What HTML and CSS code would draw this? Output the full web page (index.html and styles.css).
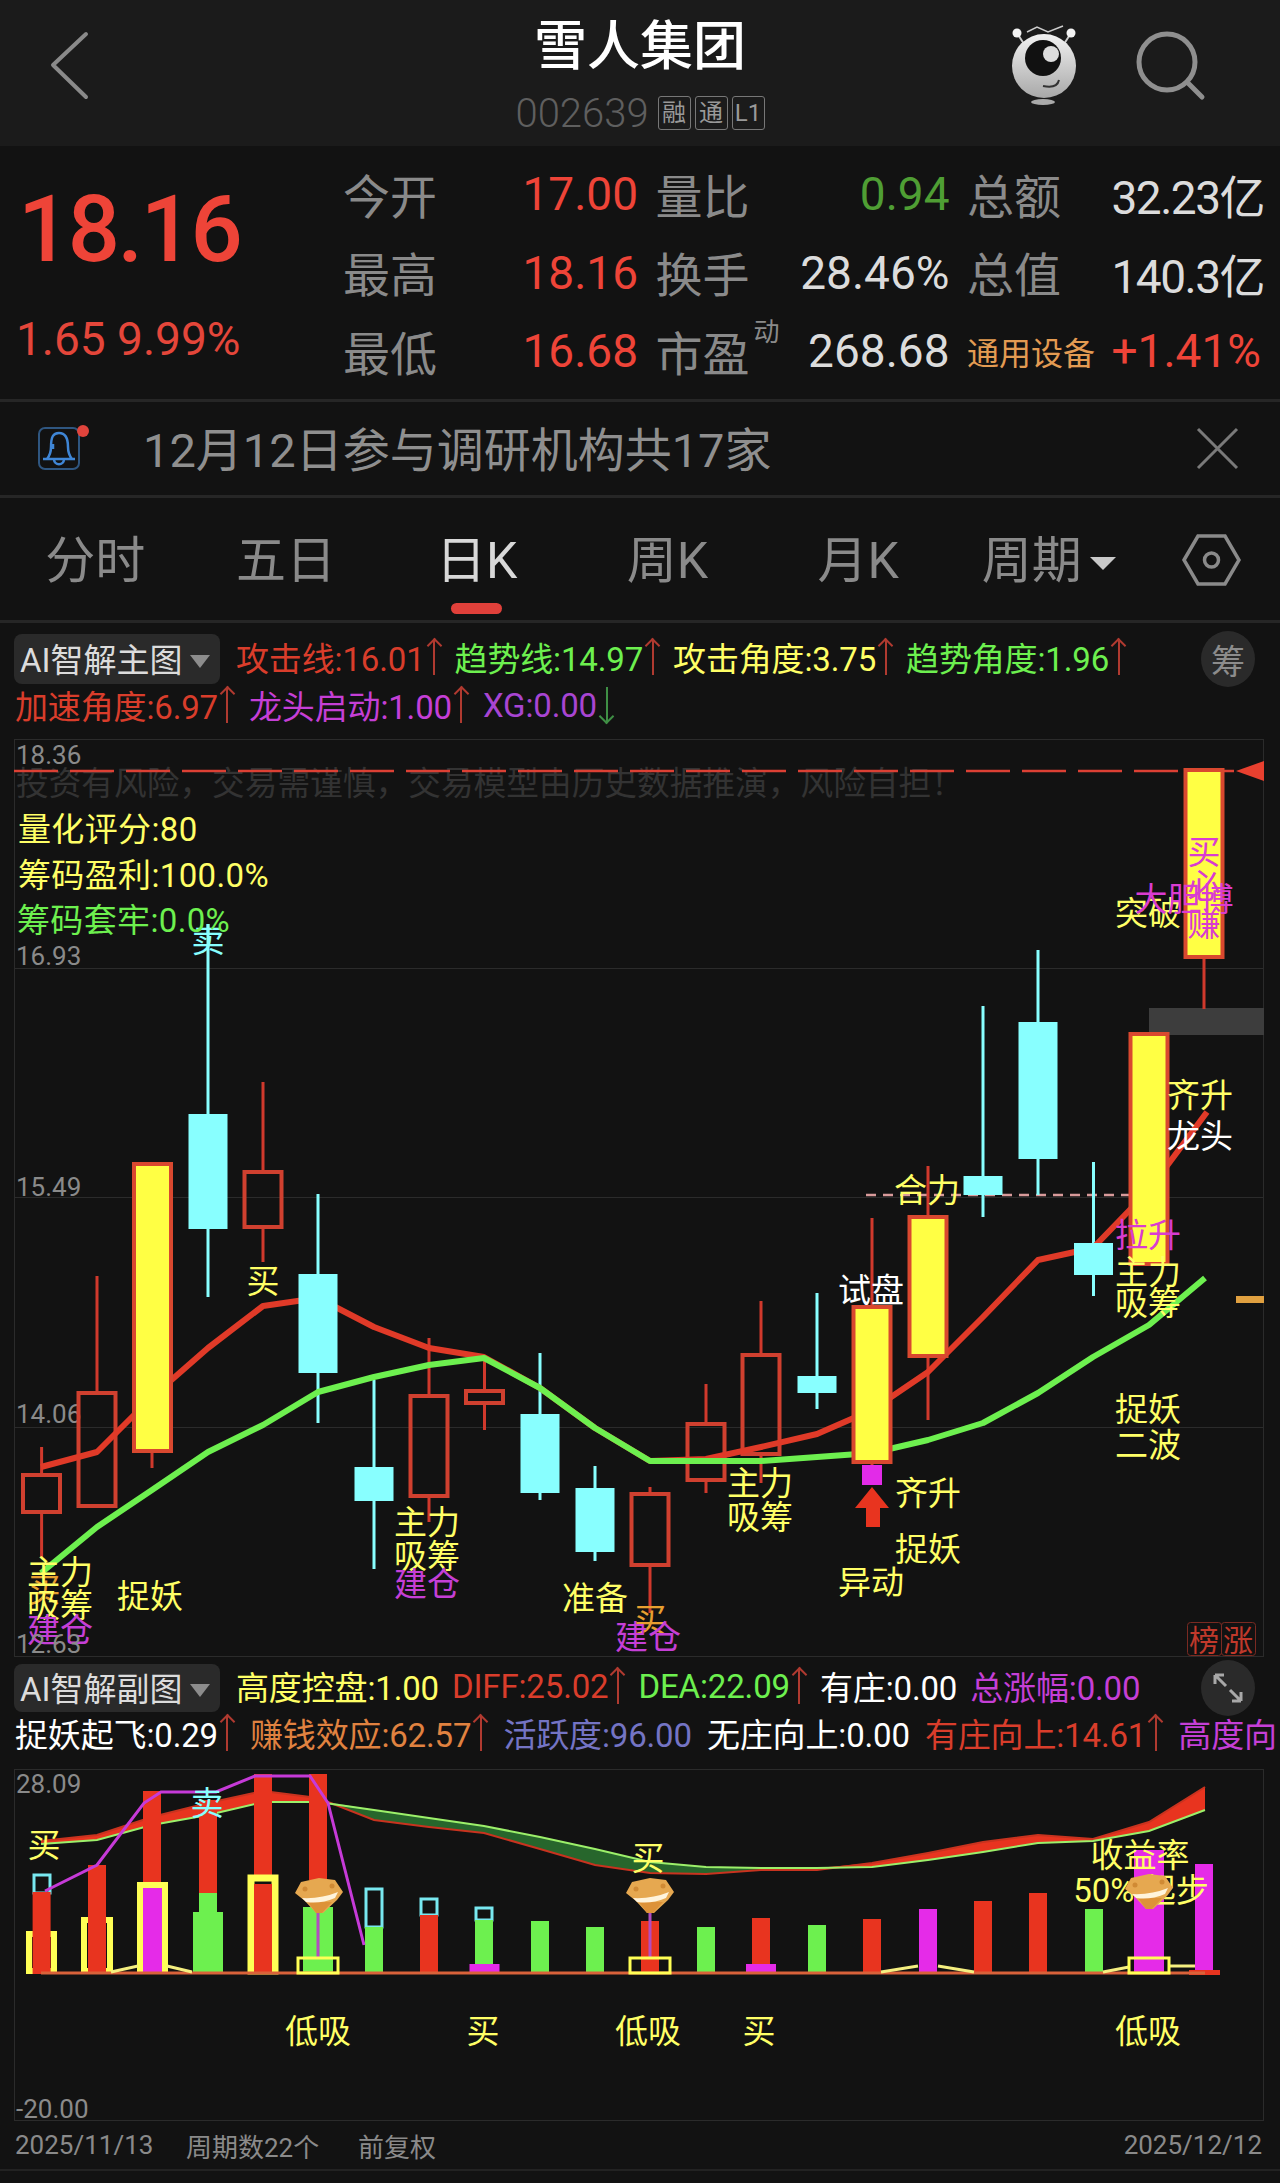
FILE: index.html
```html
<!DOCTYPE html>
<html lang="zh-CN">
<head>
  <meta charset="UTF-8">
  <meta name="viewport" content="width=device-width, initial-scale=1.0">
  <title>雪人集团 002639</title>
  <link rel="stylesheet" href="styles.css">
</head>
<body>
  <!-- Title bar -->
  <header class="topbar">
    <div class="topbar-left">
      <svg class="back-icon" viewBox="50 0 40 146"><path d="M86 34 L53 65 L86 97" /></svg>
    </div>
    <div class="topbar-title">
      <h1>雪人集团</h1>
      <div class="code-row">
        <span class="code">002639</span>
        <span class="tag">融</span><span class="tag">通</span><span class="tag">L1</span>
      </div>
    </div>
    <div class="topbar-right">
      <svg class="top-icons" viewBox="1010 0 200 146">
        <defs>
          <linearGradient id="mascot" x1="0" y1="0" x2="0" y2="1">
            <stop offset="0" stop-color="#f2f2f2"/>
            <stop offset="1" stop-color="#a8a8a8"/>
          </linearGradient>
        </defs>
        <path class="m-thin" d="M1027 32 L1037 27 L1048 32 L1063 26" />
        <path class="m-ant" d="M1017 33 L1024 44 M1071 33 L1064 44" />
        <circle class="m-ball" cx="1017" cy="33" r="4.5"/>
        <circle class="m-ball" cx="1071" cy="33" r="4.5"/>
        <circle cx="1044" cy="66" r="32" fill="url(#mascot)"/>
        <circle cx="1043" cy="58" r="18" fill="#111"/>
        <circle cx="1051" cy="54" r="8" fill="#ddd"/>
        <path class="m-smile" d="M1043 86 Q1057 89 1059 80" />
        <ellipse cx="1043" cy="102" rx="12" ry="3" fill="#aaa"/>
        <circle class="search" cx="1167" cy="62" r="28"/>
        <path class="search" d="M1188 83 L1202 97" />
      </svg>
    </div>
  </header>

  <!-- Quote block -->
  <section class="quote">
    <div class="price-col">
      <div class="price">18.16</div>
      <div class="change">1.65 9.99%</div>
    </div>
    <div class="stats">
      <div class="stat"><span class="stat-label">今开</span><span class="red">17.00</span></div>
      <div class="stat"><span class="stat-label">量比</span><span class="green">0.94</span></div>
      <div class="stat"><span class="stat-label">总额</span><span class="light money">32.23亿</span></div>
      <div class="stat"><span class="stat-label">最高</span><span class="red">18.16</span></div>
      <div class="stat"><span class="stat-label">换手</span><span class="light">28.46%</span></div>
      <div class="stat"><span class="stat-label">总值</span><span class="light money">140.3亿</span></div>
      <div class="stat"><span class="stat-label">最低</span><span class="red">16.68</span></div>
      <div class="stat"><span class="stat-label">市盈<sup>动</sup></span><span class="light">268.68</span></div>
      <div class="stat"><span class="sector">通用设备</span><span class="red">+1.41%</span></div>
    </div>
  </section>

  <!-- Notice -->
  <section class="notice">
    <svg class="bell" viewBox="36 425 54 48">
      <rect class="bell-box" x="39" y="428" width="40" height="41" rx="6"/>
      <path class="bell-line" d="M47 459 Q51 454 51 447 C51 437 53 433 59 433 C65 433 68 437 68 447 Q68 454 72 459 M43 459 H75 M54 459 C54 466 64 466 64 459 M53 444 V449" />
      <circle cx="83" cy="431" r="6" fill="#e0443c"/>
    </svg>
    <span class="notice-text">12月12日参与调研机构共17家</span>
    <svg class="close" viewBox="1198 428 44 44"><path d="M1200 430 L1239 469 M1239 430 L1200 469" /></svg>
  </section>

  <!-- Period tabs -->
  <nav class="tabs">
    <a class="tab">分时</a>
    <a class="tab">五日</a>
    <a class="tab active">日K<i class="tab-mark"></i></a>
    <a class="tab">周K</a>
    <a class="tab">月K</a>
    <a class="tab">周期<i class="tab-caret"></i></a>
    <svg class="hex" viewBox="1182 534 59 52">
      <path d="M1184 560 L1198 536 L1225 536 L1239 560 L1225 584 L1198 584 Z" />
      <circle cx="1211.5" cy="560" r="7"/>
    </svg>
  </nav>

  <!-- Main chart legend -->
  <section class="legend legend-main">
    <div class="legend-row">
      <div class="pill">AI智解主图<i class="pill-caret"></i></div>
      <span class="lg c-red">攻击线:16.01<i class="arrow up"></i></span>
      <span class="lg c-green">趋势线:14.97<i class="arrow up"></i></span>
      <span class="lg c-yellow">攻击角度:3.75<i class="arrow up"></i></span>
      <span class="lg c-green">趋势角度:1.96<i class="arrow up"></i></span>
    </div>
    <div class="legend-row second">
      <span class="lg c-red">加速角度:6.97<i class="arrow up"></i></span>
      <span class="lg c-purple">龙头启动:1.00<i class="arrow up"></i></span>
      <span class="lg c-violet">XG:0.00<i class="arrow down"></i></span>
    </div>
    <div class="round-btn">筹</div>
  </section>

  <!-- Main chart, drawn in page coordinates -->
  <svg class="chart chart-main" viewBox="0 739 1280 918">
    <rect class="box" x="14.5" y="739.5" width="1249" height="917"/>
    <path class="grid" d="M14 968.5 H1264 M14 1197.5 H1264 M14 1427.5 H1264"/>
    <text class="axis" x="16" y="755">18.36</text>
    <text class="axis" x="16" y="956">16.93</text>
    <text class="axis" x="16" y="1187">15.49</text>
    <text class="axis" x="16" y="1414">14.06</text>
    <text class="watermark" x="16" y="784">投资有风险，交易需谨慎，交易模型由历史数据推演，风险自担！</text>
    <path class="last-line" d="M14 771 H1236"/>
    <path class="last-mark" d="M1236 771 L1264 761 L1264 781 Z"/>
    <rect class="gray-bar" x="1149" y="1008" width="115" height="27"/>
    <path class="pink-dash" d="M866 1195 H1130"/>

    <!-- wicks -->
    <path class="wick-r" d="M41.6 1447V1473 M41.6 1513V1557 M97 1276V1391 M152 1452V1468 M263 1082V1170 M263 1228V1262 M429 1338V1394 M429 1497V1522 M484.5 1357V1389 M484.5 1404V1430 M650 1487V1492 M650 1566V1613 M706 1384V1422 M706 1481V1493 M761 1301V1353 M761 1455V1483 M872 1218V1305 M872 1463V1475 M928 1166V1215 M928 1357V1420 M1204 957V1009"/>
    <path class="wick-c" d="M208 924V1114 M208 1229V1297 M318 1194V1274 M318 1373V1423 M374 1380V1467 M374 1501V1569 M540 1353V1414 M540 1493V1500 M595 1466V1488 M595 1552V1561 M817 1293V1376 M817 1393V1409 M983 1006V1176 M983 1195V1217 M1038 950V1022 M1038 1159V1195 M1093.5 1162V1243 M1093.5 1275V1296"/>

    <!-- hollow candles -->
    <rect class="hollow" x="23" y="1475" width="37" height="37"/>
    <rect class="hollow" x="78.5" y="1393" width="37" height="113"/>
    <rect class="hollow" x="244.5" y="1172" width="37" height="55"/>
    <rect class="hollow" x="410.5" y="1396" width="37" height="100"/>
    <rect class="hollow" x="466" y="1391" width="37" height="12"/>
    <rect class="hollow" x="631.5" y="1494" width="37" height="71"/>
    <rect class="hollow" x="687.5" y="1424" width="37" height="56"/>
    <rect class="hollow" x="742.5" y="1355" width="37" height="99"/>

    <!-- moving averages -->
    <polyline class="ma-red" points="41,1467 97,1452 152,1397 208,1348 263,1306 318,1298 374,1327 429,1348 484,1357 540,1388 595,1428 650,1461 706,1459 761,1447 817,1434 872,1410 928,1372 983,1317 1038,1260 1093,1248 1149,1190 1207,1112"/>
    <polyline class="ma-green" points="41,1573 97,1527 152,1490 208,1452 263,1425 318,1392 374,1377 429,1365 484,1358 540,1388 595,1428 650,1461 706,1461 761,1461 817,1457 872,1453 928,1440 983,1423 1038,1393 1093,1357 1149,1325 1205,1278"/>

    <!-- filled candles -->
    <rect class="solid" x="134" y="1164" width="37" height="287"/>
    <rect class="solid" x="853.5" y="1307" width="37" height="155"/>
    <rect class="solid" x="909.5" y="1217" width="37" height="139"/>
    <rect class="solid" x="1130.5" y="1034" width="37" height="230"/>
    <rect class="solid" x="1185.5" y="770" width="37" height="187"/>
    <rect class="cyan" x="188.5" y="1114" width="39" height="115"/>
    <rect class="cyan" x="298.5" y="1274" width="39" height="99"/>
    <rect class="cyan" x="354.5" y="1467" width="39" height="34"/>
    <rect class="cyan" x="520.5" y="1414" width="39" height="79"/>
    <rect class="cyan" x="575.5" y="1488" width="39" height="64"/>
    <rect class="cyan" x="797.5" y="1376" width="39" height="17"/>
    <rect class="cyan" x="963.5" y="1176" width="39" height="19"/>
    <rect class="cyan" x="1018.5" y="1022" width="39" height="137"/>
    <rect class="cyan" x="1074" y="1243" width="39" height="32"/>

    <!-- signal marks -->
    <rect class="mark-m" x="862" y="1465" width="20" height="20"/>
    <path class="mark-r" d="M872 1487 L889 1508 L880 1508 L880 1527 L866 1527 L866 1508 L855 1508 Z"/>
    <rect class="mark-o" x="1236" y="1296" width="28" height="7"/>

    <!-- chart notes -->
    <text class="note c-cyan" x="208" y="940">卖</text>
    <text class="note c-yellow" x="263" y="1281">买</text>
    <text class="note c-yellow" x="1148" y="913">突破</text>
    <text class="note c-magenta" x="1204" y="852">买</text>
    <text class="note c-magenta" x="1204" y="886">必</text>
    <text class="note c-magenta" x="1204" y="924">赚</text>
    <text class="note c-magenta" x="1184" y="899">大胆博</text>
    <text class="note c-yellow" x="1200" y="1095">齐升</text>
    <text class="note c-white" x="1200" y="1136">龙头</text>
    <text class="note c-yellow" x="927" y="1190">合力</text>
    <text class="note c-magenta" x="1148" y="1235">拉升</text>
    <text class="note c-yellow" x="1148" y="1272">主力</text>
    <text class="note c-yellow" x="1148" y="1303">吸筹</text>
    <text class="note c-white" x="871" y="1290">试盘</text>
    <text class="note c-yellow" x="760" y="1483">主力</text>
    <text class="note c-yellow" x="760" y="1517">吸筹</text>
    <text class="note c-yellow" x="928" y="1493">齐升</text>
    <text class="note c-yellow" x="928" y="1549">捉妖</text>
    <text class="note c-yellow" x="871" y="1582">异动</text>
    <text class="note c-yellow" x="1148" y="1409">捉妖</text>
    <text class="note c-yellow" x="1148" y="1445">二波</text>
    <text class="note c-orange" x="44" y="1590">买</text>
    <text class="note c-yellow" x="60" y="1572">主力</text>
    <text class="note c-yellow" x="60" y="1605">吸筹</text>
    <text class="note c-purple" x="60" y="1630">建仓</text>
    <text class="note c-yellow" x="150" y="1596">捉妖</text>
    <text class="note c-yellow" x="427" y="1522">主力</text>
    <text class="note c-yellow" x="427" y="1556">吸筹</text>
    <text class="note c-purple" x="427" y="1584">建仓</text>
    <text class="note c-yellow" x="595" y="1598">准备</text>
    <text class="note c-orange" x="650" y="1620">买</text>
    <text class="note c-purple" x="648" y="1637">建仓</text>
    <text class="axis" x="16" y="1644">12.63</text>
    <text class="stamp" x="1204" y="1640">榜</text>
    <text class="stamp" x="1238" y="1640">涨</text>
    <rect class="stamp-box" x="1187.5" y="1622.5" width="34" height="33" rx="3"/>
    <rect class="stamp-box" x="1221.5" y="1622.5" width="34" height="33" rx="3"/>
    <text class="note wide c-yellow" x="18" y="829" text-anchor="start">量化评分:80</text>
    <text class="note wide c-yellow" x="18" y="875" text-anchor="start">筹码盈利:100.0%</text>
    <text class="note wide c-green" x="17" y="920" text-anchor="start">筹码套牢:0.0%</text>
  </svg>

  <!-- Sub chart legend -->
  <section class="legend legend-sub">
    <div class="legend-row">
      <div class="pill">AI智解副图<i class="pill-caret"></i></div>
      <span class="lg c-yellow">高度控盘:1.00</span>
      <span class="lg c-red">DIFF:25.02<i class="arrow up"></i></span>
      <span class="lg c-green">DEA:22.09<i class="arrow up"></i></span>
      <span class="lg c-white">有庄:0.00</span>
      <span class="lg c-purple">总涨幅:0.00</span>
    </div>
    <div class="legend-row second">
      <span class="lg c-white">捉妖起飞:0.29<i class="arrow up"></i></span>
      <span class="lg c-orange2">赚钱效应:62.57<i class="arrow up"></i></span>
      <span class="lg c-slate">活跃度:96.00</span>
      <span class="lg c-white">无庄向上:0.00</span>
      <span class="lg c-red">有庄向上:14.61<i class="arrow up"></i></span>
      <span class="lg c-purple">高度向</span>
    </div>
    <div class="round-btn">
      <svg class="expand" viewBox="0 0 32 32"><path d="M3 3 L14 14 M3 3 H12 M3 3 V12 M29 29 L18 18 M29 29 H20 M29 29 V20"/></svg>
    </div>
  </section>

  <!-- Sub chart, same coordinates as the page -->
  <svg class="chart chart-sub" viewBox="0 1769 1280 352">
    <defs>
      <g id="gem">
        <path class="gem-body" d="M-24 -2 L-18 -13 L0 -17 L16 -15 L24 -3 L18 5 L4 18 L-3 18 L-14 6 Z"/>
        <path class="gem-tip" d="M-11 7 L13 7 L3 18 L-3 18 Z"/>
        <circle class="gem-spot" cx="-14" cy="-6" r="2.5"/>
        <circle class="gem-spot" cx="13" cy="-9" r="2.5"/>
        <path class="gem-band" d="M-17 3 Q2 4 19 -3 L16 3 Q2 9 -13 7 Z"/>
      </g>
    </defs>
    <rect class="box" x="14.5" y="1769.5" width="1249" height="351"/>
    <text class="axis" x="16" y="1784">28.09</text>
    <text class="axis" x="16" y="2109">-20.00</text>

    <!-- yellow outlines behind the first bars -->
    <rect class="y-box" x="29" y="1934" width="25" height="37"/>
    <rect class="y-box" x="84" y="1920" width="26" height="51"/>

    <!-- DIFF and DEA -->
    <polygon class="band-red" points="41,1841 97,1835 152,1817 208,1803 263,1791 318,1798 328,1802 318,1802 263,1802 208,1815 152,1825 97,1840 41,1844"/>
    <polygon class="band-green" points="328,1802 374,1810 429,1818 484,1826 540,1837 595,1849 650,1862 706,1867 761,1868 761,1870 706,1874 650,1873 595,1865 540,1849 484,1833 429,1827 374,1820"/>
    <polygon class="band-red" points="817,1868 872,1863 928,1853 983,1842 1038,1835 1093,1839 1149,1822 1205,1787 1205,1810 1149,1831 1093,1841 1038,1843 983,1852 928,1860 872,1867"/>
    <polyline class="diff" points="41,1841 97,1835 152,1817 208,1803 263,1791 318,1798 374,1820 429,1827 484,1833 540,1849 595,1865 650,1873 706,1874 761,1870 817,1870 872,1863 928,1853 983,1842 1038,1835 1093,1839 1149,1822 1205,1787"/>
    <polyline class="dea" points="41,1844 97,1840 152,1825 208,1815 263,1802 318,1802 374,1810 429,1818 484,1826 540,1837 595,1849 650,1862 706,1867 761,1868 817,1868 872,1867 928,1860 983,1852 1038,1843 1093,1841 1149,1831 1205,1810"/>

    <!-- volume style bars -->
    <rect class="b-cy" x="34" y="1875" width="16" height="18"/>
    <rect class="b-r" x="32.6" y="1892" width="18" height="82"/>
    <rect class="b-r" x="88" y="1865" width="18" height="109"/>
    <rect class="b-r" x="143" y="1791" width="18" height="92"/>
    <rect class="y-box" x="140" y="1885" width="25" height="86"/>
    <rect class="b-m" x="143" y="1888" width="19" height="85"/>
    <rect class="b-r" x="199" y="1800" width="18" height="93"/>
    <rect class="b-g" x="199" y="1893" width="18" height="20"/>
    <rect class="b-g" x="193" y="1912" width="30" height="62"/>
    <rect class="b-r" x="254" y="1774" width="18" height="101"/>
    <rect class="y-box thick" x="251" y="1878" width="24" height="93"/>
    <rect class="b-r" x="254" y="1884" width="18" height="89"/>
    <rect class="b-r" x="309" y="1774" width="18" height="106"/>
    <rect class="b-g" x="303" y="1907" width="30" height="66"/>
    <rect class="b-cy" x="366" y="1889" width="16" height="38"/>
    <rect class="b-g" x="365" y="1927" width="18" height="47"/>
    <rect class="b-cy" x="421" y="1899" width="16" height="16"/>
    <rect class="b-r" x="420" y="1915" width="18" height="59"/>
    <rect class="b-cy" x="476" y="1908" width="16" height="12"/>
    <rect class="b-g" x="475" y="1920" width="18" height="45"/>
    <rect class="b-m" x="469.5" y="1964" width="30" height="10"/>
    <rect class="b-g" x="531" y="1921" width="18" height="53"/>
    <rect class="b-g" x="586" y="1927" width="18" height="47"/>
    <rect class="b-r" x="641" y="1921" width="18" height="53"/>
    <rect class="b-g" x="697" y="1927" width="18" height="47"/>
    <rect class="b-r" x="752" y="1918" width="18" height="46"/>
    <rect class="b-m" x="746" y="1964" width="30" height="10"/>
    <rect class="b-g" x="808" y="1925" width="18" height="49"/>
    <rect class="b-r" x="863" y="1919" width="18" height="55"/>
    <rect class="b-m" x="919" y="1909" width="18" height="65"/>
    <rect class="b-r" x="974" y="1901" width="18" height="73"/>
    <rect class="b-r" x="1029" y="1893" width="18" height="81"/>
    <rect class="b-g" x="1085" y="1909" width="18" height="65"/>
    <rect class="b-m" x="1134" y="1850" width="30" height="124"/>
    <rect class="b-m" x="1195" y="1864" width="18" height="110"/>
    <rect class="b-r" x="1189" y="1970" width="31" height="5"/>

    <polyline class="turn" points="45,1891 97,1865 144,1803 161,1792 216,1792 255,1776 310,1776 328,1803 364,1945"/>
    <path class="stem" d="M318 1905 V1957 M650 1905 V1957"/>
    <path class="base" d="M41 1973 H1205"/>
    <path class="low" d="M111 1972 L138 1966 M167 1966 L192 1972 M881 1972 L918 1966 M938 1966 L974 1972 M1103 1972 L1129 1967 M1169 1966 H1195"/>
    <rect class="y-box low-box" x="298" y="1958" width="40" height="15"/>
    <rect class="y-box low-box" x="630" y="1958" width="40" height="15"/>
    <rect class="y-box low-box" x="1129" y="1958" width="40" height="15"/>

    <text class="note c-yellow" x="44" y="1845">买</text>
    <text class="note c-cyan" x="207" y="1803">卖</text>
    <text class="note c-yellow" x="648" y="1858">买</text>
    <text class="note c-yellow" x="1140" y="1855">收益率</text>
    <text class="note c-yellow" x="1141" y="1890">50% 起步</text>
    <text class="note c-yellow" x="318" y="2031">低吸</text>
    <text class="note c-yellow" x="483" y="2031">买</text>
    <text class="note c-yellow" x="648" y="2031">低吸</text>
    <text class="note c-yellow" x="759" y="2031">买</text>
    <text class="note c-yellow" x="1148" y="2031">低吸</text>

    <use href="#gem" x="319" y="1895"/>
    <use href="#gem" x="650" y="1895"/>
    <use href="#gem" x="1149" y="1891"/>
  </svg>

  <footer class="foot">
    <span class="foot-date">2025/11/13</span>
    <span class="foot-count">周期数22个</span>
    <span>前复权</span>
    <span class="foot-end">2025/12/12</span>
  </footer>
</body>
</html>
```

FILE: styles.css
```css
html, body {
  margin: 0;
  padding: 0;
  height: 2183px;
  overflow: hidden;
  background: #121212;
  color: #ddd;
  font-family: Roboto, "Noto Sans CJK SC", sans-serif;
}
i { font-style: normal; }

/* title bar */
.topbar {
  display: grid;
  grid-template-columns: 1fr auto 1fr;
  height: 146px;
  background: #1b1b1b;
}
.back-icon {
  display: block;
  width: 40px;
  height: 146px;
  margin-left: 50px;
}
.back-icon path {
  fill: none;
  stroke: #8a8a8a;
  stroke-width: 4;
  stroke-linecap: round;
  stroke-linejoin: round;
}
.topbar-title {
  text-align: center;
}
.topbar-title h1 {
  margin: 17px 0 0;
  font-size: 53px;
  font-weight: 500;
  line-height: 60px;
  color: #fff;
}
.code-row {
  display: flex;
  justify-content: center;
  align-items: center;
  gap: 4px;
  margin-top: 19px;
  height: 34px;
}
.code {
  margin-right: 5px;
  font-size: 40px;
  font-weight: 300;
  color: #5f5f5f;
}
.tag {
  width: 31px;
  height: 32px;
  border: 1px solid #777;
  border-radius: 3px;
  font-size: 24px;
  line-height: 32px;
  text-align: center;
  color: #999;
}
.topbar-right {
  display: flex;
  justify-content: flex-end;
}
.top-icons {
  width: 200px;
  height: 146px;
  margin-right: 70px;
}
.m-thin { fill: none; stroke: #ccc; stroke-width: 1.5; }
.m-ant { fill: none; stroke: #ccc; stroke-width: 2; }
.m-ball { fill: #f4f4f4; }
.m-smile { fill: none; stroke: #333; stroke-width: 2; }
.search {
  fill: none;
  stroke: #8f8f8f;
  stroke-width: 5;
  stroke-linecap: round;
}

/* quote */
.quote {
  display: flex;
  height: 253px;
  border-bottom: 3px solid #262626;
}
.price-col {
  width: 343px;
  padding-left: 16px;
  box-sizing: border-box;
}
.price {
  margin-top: 34px;
  margin-left: 2px;
  font-size: 92px;
  font-weight: 500;
  line-height: 100px;
  letter-spacing: -2.5px;
  color: #ee4438;
}
.change {
  margin-top: 30px;
  font-size: 46px;
  line-height: 58px;
  color: #e4463a;
}
.stats {
  display: grid;
  grid-template-columns: 295px 294px 294px;
  grid-auto-rows: 78.5px;
  column-gap: 17.5px;
  padding-top: 9px;
  font-size: 46px;
}
.stat {
  display: flex;
  justify-content: space-between;
  align-items: center;
}
.stat-label {
  position: relative;
  margin-bottom: 2px;
  font-size: 47px;
  color: #8a8a8a;
}
.stat-label sup {
  position: absolute;
  top: 1px;
  right: -30px;
  font-size: 26px;
  line-height: 30px;
}
.sector {
  font-size: 32px;
  color: #e39b52;
}
.money {
  margin-right: -3px;
  letter-spacing: -1.5px;
}
.red { color: #ee4438; }
.green { color: #4f9e34; }
.light { color: #dcdcdc; }

/* notice */
.notice {
  display: flex;
  align-items: center;
  height: 93px;
  border-bottom: 3px solid #262626;
}
.bell {
  width: 54px;
  height: 48px;
  margin-left: 36px;
}
.bell-box { fill: none; stroke: #2f5680; stroke-width: 2; }
.bell-line { fill: none; stroke: #3f86d6; stroke-width: 2.5; }
.notice-text {
  margin-left: 53px;
  margin-bottom: 5px;
  font-size: 47px;
  color: #8f8f8f;
}
.close {
  width: 44px;
  height: 44px;
  margin-left: auto;
  margin-right: 40px;
}
.close path { stroke: #7a7a7a; stroke-width: 3; fill: none; }

/* tabs */
.tabs {
  position: relative;
  display: grid;
  grid-template-columns: repeat(6, 190.7px);
  height: 122px;
  border-bottom: 3px solid #262626;
  font-size: 50px;
  color: #8a8a8a;
}
.tab {
  position: relative;
  padding-top: 38px;
  line-height: 50px;
  text-align: center;
}
.tab.active { color: #d8d8d8; }
.tab-mark {
  position: absolute;
  left: 70px;
  top: 105px;
  width: 51px;
  height: 11px;
  border-radius: 6px;
  background: #e0403a;
}
.tab-caret {
  display: inline-block;
  margin-left: 8px;
  vertical-align: 8px;
  border-left: 13px solid transparent;
  border-right: 13px solid transparent;
  border-top: 13px solid #c8c8c8;
}
.hex {
  position: absolute;
  top: 36px;
  left: 1182px;
  width: 59px;
  height: 52px;
  fill: none;
  stroke: #8a8a8a;
  stroke-width: 3.5;
}

/* legends */
.legend {
  position: relative;
  box-sizing: border-box;
  overflow: hidden;
  font-size: 33px;
}
.legend-main { height: 116px; padding-top: 11px; }
.legend-sub { height: 112px; padding-top: 7px; }
.legend-row {
  display: flex;
  align-items: center;
  gap: 13px;
  height: 50px;
  white-space: nowrap;
}
.legend-sub .legend-row { height: 48px; }
.legend-row.second { padding-left: 15px; margin-top: -2px; height: 50px; gap: 14px; }
.legend-sub .legend-row.second { gap: 15px; }
.pill {
  display: flex;
  align-items: center;
  box-sizing: border-box;
  width: 206px;
  height: 100%;
  margin-left: 14px;
  margin-right: 3px;
  padding-left: 6px;
  padding-bottom: 2px;
  border-radius: 8px;
  background: #2a2a2a;
  color: #dcdcdc;
}
.pill-caret {
  margin-left: 7px;
  margin-top: 6px;
  border-left: 10px solid transparent;
  border-right: 10px solid transparent;
  border-top: 13px solid #8c8c8c;
}
.lg {
  display: flex;
  align-items: center;
  margin-bottom: 4px;
  letter-spacing: -0.15px;
}
.arrow {
  position: relative;
  display: block;
  width: 15px;
  height: 36px;
  margin-left: 2px;
  background: linear-gradient(currentColor, currentColor) center / 2px 100% no-repeat;
}
.arrow::before {
  content: "";
  position: absolute;
  left: 2px;
  width: 9px;
  height: 9px;
  border-left: 2px solid;
  border-top: 2px solid;
  transform: rotate(45deg);
}
.arrow.up { color: #b03a30; }
.arrow.up::before { top: 1px; }
.arrow.down { color: #3f8f45; }
.arrow.down::before { bottom: 1px; transform: rotate(225deg); }
.round-btn {
  position: absolute;
  top: 8px;
  left: 1201px;
  display: flex;
  align-items: center;
  justify-content: center;
  width: 54px;
  height: 56px;
  border-radius: 50%;
  background: #2a2a2a;
  color: #8c8c8c;
  font-size: 34px;
}
.legend-sub .round-btn { top: 3px; }
.expand {
  width: 32px;
  height: 32px;
  fill: none;
  stroke: #a8a8a8;
  stroke-width: 3;
}

.c-red { color: #d93d2b; fill: #d93d2b; }
.c-green { color: #6df04f; fill: #6df04f; }
.c-yellow { color: #ffff66; fill: #ffff66; }
.c-purple { color: #c53fd6; fill: #c53fd6; }
.c-violet { color: #a845d2; }
.c-white { color: #fff; fill: #fff; }
.c-cyan { fill: #88ffff; }
.c-magenta { fill: #d93cd0; }
.c-orange { fill: #e8a030; }
.c-orange2 { color: #e08240; }
.c-slate { color: #7474c4; }

/* charts */
.chart {
  display: block;
  width: 1280px;
}
.chart-main { height: 918px; }
.chart-sub { height: 352px; }
.box { fill: none; stroke: #2b2b2b; }
.grid { fill: none; stroke: #2b2b2b; }
.axis {
  font-size: 26px;
  fill: #8a8a8a;
  dominant-baseline: central;
}
.watermark {
  font-size: 32.7px;
  fill: #333;
  dominant-baseline: central;
}
.note {
  font-size: 33px;
  text-anchor: middle;
  dominant-baseline: central;
}
.note[text-anchor="start"] { text-anchor: start; }
.note.wide { letter-spacing: 0.35px; }
.last-line {
  fill: none;
  stroke: #dc4034;
  stroke-width: 2.5;
  stroke-dasharray: 44 12;
}
.last-mark { fill: #e8402f; }
.gray-bar { fill: #3d3d3d; }
.pink-dash {
  fill: none;
  stroke: #d89a9a;
  stroke-width: 2.5;
  stroke-dasharray: 10 7;
}
.wick-r { fill: none; stroke: #d0392c; stroke-width: 3; }
.wick-c { fill: none; stroke: #88ffff; stroke-width: 3; }
.hollow { fill: none; stroke: #d0402f; stroke-width: 4; }
.solid { fill: #ffff44; stroke: #d9482f; stroke-width: 4; }
.cyan { fill: #88ffff; }
.ma-red { fill: none; stroke: #e03a28; stroke-width: 6; stroke-linejoin: round; }
.ma-green { fill: none; stroke: #6df04f; stroke-width: 6; stroke-linejoin: round; }
.mark-m { fill: #e22be8; }
.mark-r { fill: #e8341f; }
.mark-o { fill: #e0a040; }
.stamp {
  font-size: 30px;
  fill: #c0392b;
  text-anchor: middle;
  dominant-baseline: central;
}
.stamp-box { fill: none; stroke: #7a2a22; }

.band-red { fill: #e8341f; }
.band-green { fill: #27662c; }
.diff { fill: none; stroke: #c8331f; stroke-width: 2; }
.dea { fill: none; stroke: #9cf06a; stroke-width: 2; }
.b-r { fill: #e8341f; }
.b-g { fill: #6df04f; }
.b-m { fill: #e52be8; }
.b-cy { fill: none; stroke: #78e8f0; stroke-width: 3; }
.y-box { fill: none; stroke: #ffff55; stroke-width: 6; }
.y-box.thick { stroke-width: 7; }
.low-box { stroke-width: 3; }
.turn { fill: none; stroke: #c63ad8; stroke-width: 3; }
.stem { fill: none; stroke: #b24cc0; stroke-width: 3; }
.base { fill: none; stroke: #d9623a; stroke-width: 3; }
.low { fill: none; stroke: #f5ef80; stroke-width: 3; }
.gem-body { fill: #e6a850; }
.gem-tip { fill: #dd9238; }
.gem-spot { fill: #d08a34; }
.gem-band { fill: #fff4dc; }

/* footer */
.foot {
  display: flex;
  align-items: center;
  box-sizing: border-box;
  height: 50px;
  padding-left: 15px;
  border-bottom: 2px solid #222;
  font-size: 26px;
  color: #8a8a8a;
}
.foot-date { width: 171px; }
.foot-count { width: 172px; }
.foot-end { margin-left: auto; margin-right: 18px; }
```
